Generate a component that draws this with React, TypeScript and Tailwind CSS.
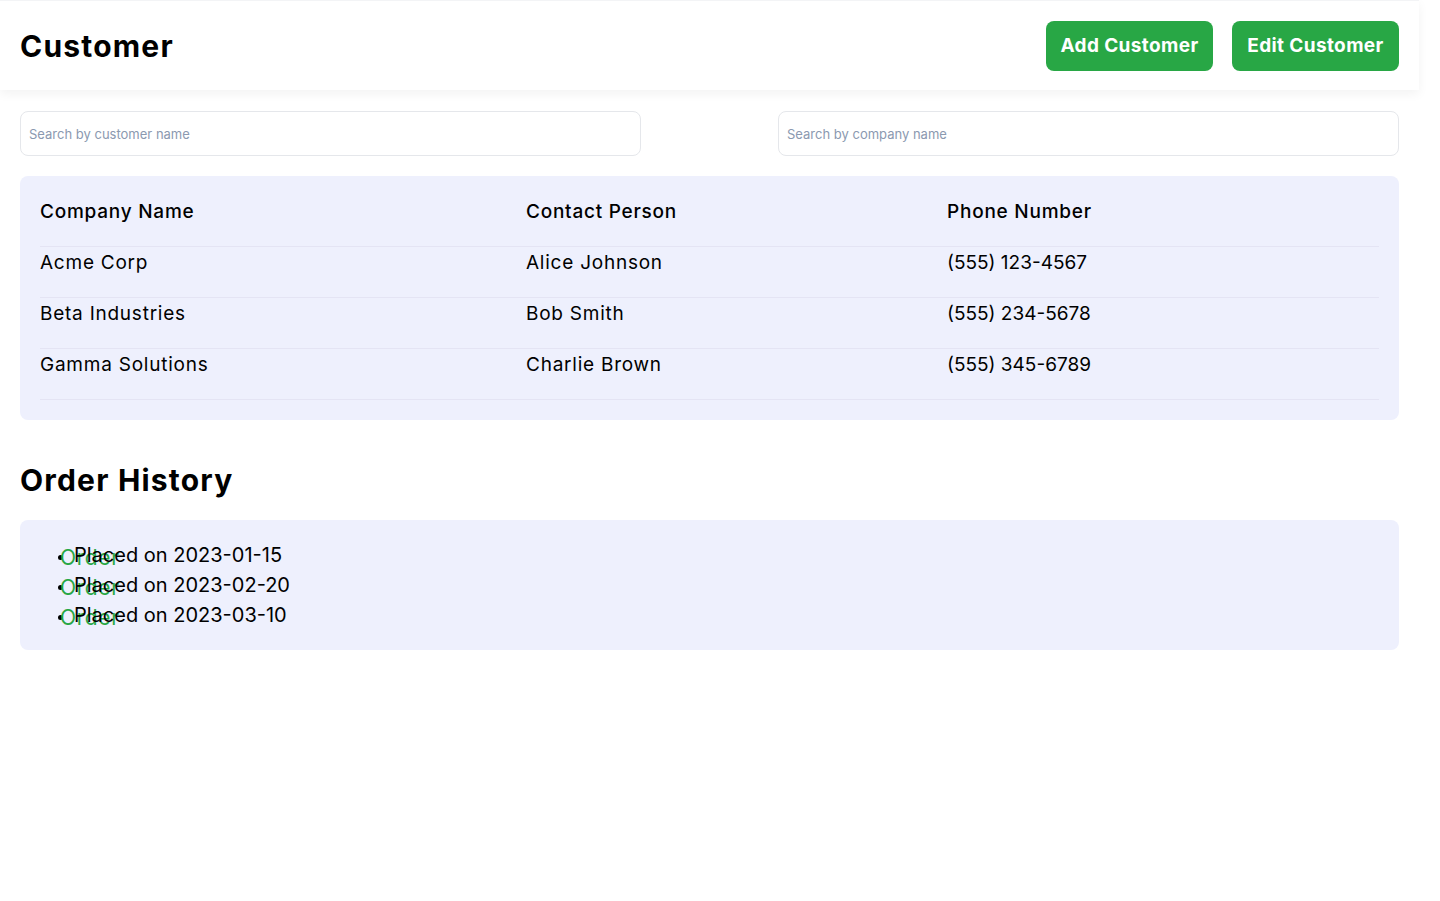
import React from "react";

const customers = [
  { company: "Acme Corp", contact: "Alice Johnson", phone: "(555) 123-4567" },
  { company: "Beta Industries", contact: "Bob Smith", phone: "(555) 234-5678" },
  { company: "Gamma Solutions", contact: "Charlie Brown", phone: "(555) 345-6789" },
];

const orders = ["2023-01-15", "2023-02-20", "2023-03-10"];

export default function App() {
  return (
    <div className="min-h-[901px] w-[1419px] bg-white text-black [font-family:Inter,'Noto_Sans',sans-serif]">
      <header className="flex h-[90px] items-center justify-between border-t border-gray-100 px-5 shadow-[0_4px_10px_rgba(0,0,0,0.05)]">
        <h1 className="pt-px text-[30px] font-bold tracking-[0.04em]">Customer</h1>
        <div className="flex gap-[19px] pt-px">
          <button className="h-[50px] w-[167px] rounded-lg bg-[#28a745] text-[19px] font-bold tracking-[0.02em] text-white">
            Add Customer
          </button>
          <button className="h-[50px] w-[167px] rounded-lg bg-[#28a745] text-[19px] font-bold tracking-[0.02em] text-white">
            Edit Customer
          </button>
        </div>
      </header>

      <main className="px-5 pt-[21px]">
        <div className="flex justify-between">
          <input
            placeholder="Search by customer name"
            className="h-[45px] w-[621px] rounded-lg border border-gray-200 px-2 text-[13px] outline-none placeholder:text-[#8b99b0]"
          />
          <input
            placeholder="Search by company name"
            className="h-[45px] w-[621px] rounded-lg border border-gray-200 px-2 text-[13px] outline-none placeholder:text-[#8b99b0]"
          />
        </div>

        <div className="mt-5 rounded-lg bg-[#eef0fd] p-5">
          <table className="w-full border-collapse text-left text-[19px] tracking-[0.04em]">
            <thead>
              <tr className="h-[50px] border-b border-[#e4e4f4] align-top">
                <th className="w-[486px] pt-[2px] font-medium">Company Name</th>
                <th className="w-[421px] pt-[2px] font-medium">Contact Person</th>
                <th className="pt-[2px] font-medium">Phone Number</th>
              </tr>
            </thead>
            <tbody>
              {customers.map((c) => (
                <tr key={c.company} className="h-[51px] border-b border-[#e4e4f4] align-top">
                  <td className="pt-[2px]">{c.company}</td>
                  <td className="pt-[2px]">{c.contact}</td>
                  <td className="pt-[2px] tracking-normal">{c.phone}</td>
                </tr>
              ))}
            </tbody>
          </table>
        </div>

        <h2 className="mt-[42px] text-[30px] font-bold leading-[36px] tracking-[0.04em]">Order History</h2>

        <div className="mt-[22px] rounded-lg bg-[#eef0fd] px-5 py-5">
          <ul className="list-disc pl-[34px] text-[20px] leading-[30px] marker:text-[14px]">
            {orders.map((d) => (
              <li key={d} className="relative">
                <span className="absolute left-[-14px] top-[3px] text-[21px] tracking-[0.03em] text-[#28a745]">Order</span>
                <span className="relative">Placed on {d}</span>
              </li>
            ))}
          </ul>
        </div>
      </main>
    </div>
  );
}
